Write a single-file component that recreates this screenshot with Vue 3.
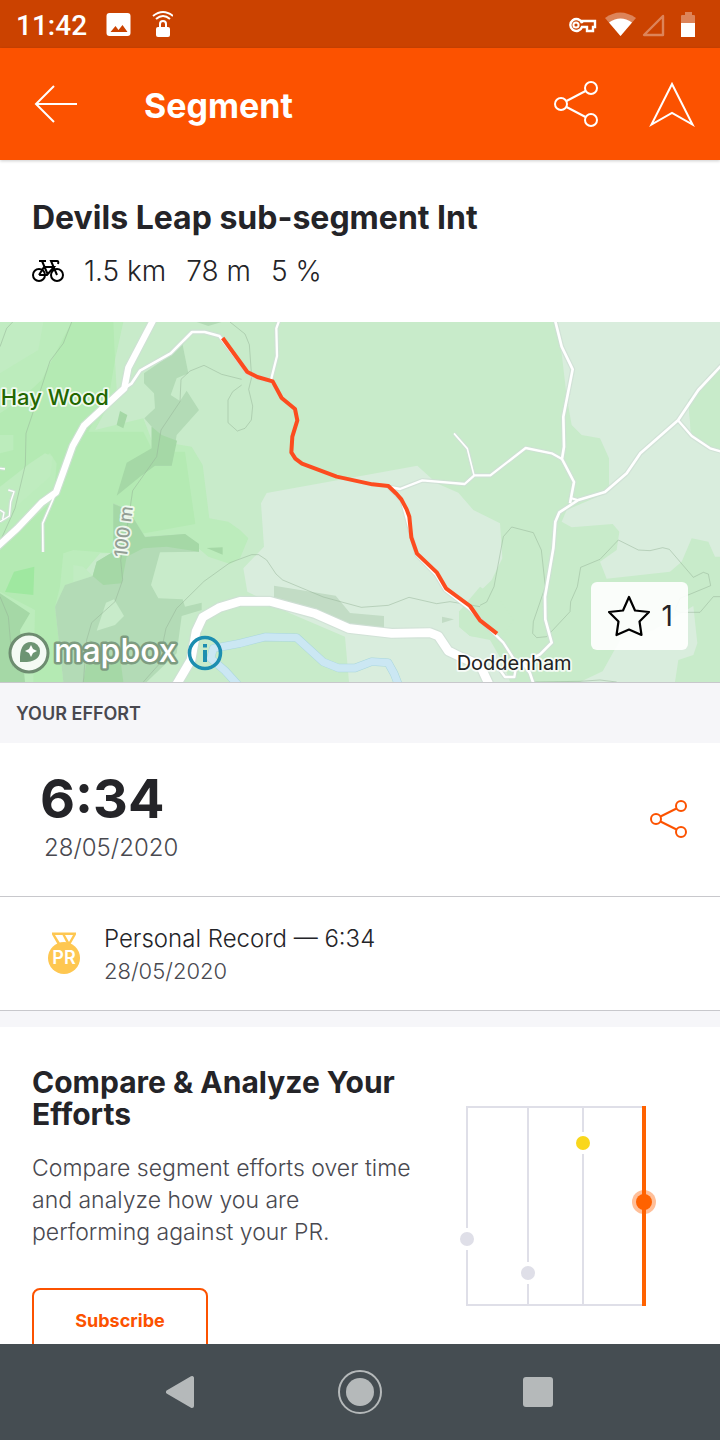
<template>
  <div class="screen">
    <div class="status">
      <span class="status__time">11:42</span>
      <svg class="status__left-icons" width="68" height="32" viewBox="0 0 68 32">
        <path fill="#fff" fill-rule="evenodd" d="M5 5h18q3 0 3 3v17q0 3-3 3h-18q-3 0-3-3v-17q0-3 3-3zM6 24h17l-5-7-4 5-3-4z" transform="translate(-0.500 0)" />
        <rect x="51" y="19" width="14" height="10" rx="2" fill="#fff" />
        <path d="M55 20v-4a3 3 0 0 1 6 0v4M51 11q7-6 14 0M48 8q10-8 20 0" fill="none" stroke="#fff" stroke-width="2" />
      </svg>
      <svg class="status__right-icons" width="130" height="32" viewBox="0 0 130 32">
        <path d="M18 14a6 6 0 1 0 0 4h5v4h6v-4h2v-6h-13z" transform="translate(-1 1)" fill="none" stroke="#fff" stroke-width="2.4" />
        <circle cx="11" cy="17" r="2.6" fill="none" stroke="#fff" stroke-width="2" />
        <path d="M40 10q15-11 31 0l-15.500 18z" fill="#fff" opacity=".35" />
        <path d="M44 14.500q11.500-8 23 0l-11.500 13.500z" fill="#fff" />
        <path d="M79 27h19v-19z" fill="none" stroke="#fff" stroke-width="2.400" stroke-linejoin="round" opacity=".35" />
        <path d="M116 15v-7q0-1 1-1h3v-3h7v3h2q1 0 1 1v7z" fill="#fff" opacity=".35" />
        <path d="M116 15h14v14h-14z" fill="#fff" />
      </svg>
    </div>

    <header class="bar">
      <button class="icon-btn" aria-label="Back">
        <svg width="44" height="40" viewBox="0 0 44 40" fill="none" stroke="#fff" stroke-width="2">
          <path d="M43 20H2M20 2L2 20l18 18" />
        </svg>
      </button>
      <h1 class="bar__title">Segment</h1>
      <button class="icon-btn" aria-label="Share">
        <svg width="46" height="48" viewBox="0 0 46 48" fill="none" stroke="#fff" stroke-width="2">
          <circle cx="7" cy="24" r="6" />
          <circle cx="37" cy="8" r="6" />
          <circle cx="37" cy="40" r="6" />
          <path d="M12.500 21L31.500 11M12.500 27L31.500 37" />
        </svg>
      </button>
      <button class="icon-btn bar__nav" aria-label="Directions">
        <svg width="48" height="48" viewBox="0 0 48 48" fill="none" stroke="#fff" stroke-width="2">
          <path d="M24 4L44.500 44.500L24 33L3.500 44.500Z" />
        </svg>
      </button>
    </header>

    <main class="content">
      <section class="summary">
        <h2 class="summary__name">Devils Leap sub-segment Int</h2>
        <div class="summary__stats">
          <svg width="32" height="24" viewBox="0 0 32 24" fill="none" stroke="#000" stroke-width="2">
            <circle cx="7" cy="16" r="6" />
            <circle cx="25" cy="16" r="6" />
            <path d="M7 16L12 8H22L15 16H7M16 16L10 2M7 2H14M25 16L19 2H25Q27 2 26 5" />
          </svg>
          <span v-for="stat in stats" :key="stat">{{ stat }}</span>
        </div>
      </section>

      <section class="map">
        <svg class="map__canvas" viewBox="0 6 2160 1080" preserveAspectRatio="xMidYMid slice">
          <rect y="6" width="2160" height="1080" fill="#c8ebca" />
          <path v-for="(area, i) in areas" :key="`a${i}`" :d="area.d" :fill="area.fill" />
          <path v-for="(line, i) in contours" :key="`c${i}`" :d="line" class="contour" />
          <path class="river-edge" :d="river" />
          <path class="river" :d="river" />
          <path v-for="(road, i) in roads" :key="`s${i}`" :d="road.d" :stroke-width="road.width + 7" class="casing" />
          <path v-for="(road, i) in roads" :key="`r${i}`" :d="road.d" :stroke-width="road.width" class="road" />
          <path class="route" d="M668 54L742 156L772 171L818 184L845 234L885 267L892 301L877 350L874 397L886 416L906 431L1010 470L1117 493L1165 498L1190 522L1204 538L1220 568L1228 590L1234 652L1251 701L1311 758L1338 805L1410 858L1440 901L1491 941" />
          <text x="2" y="255" class="label label--park">Hay Wood</text>
          <text transform="translate(380 714) rotate(-83)" class="label label--height">100 m</text>
          <text x="1370" y="1050" class="label label--town">Doddenham</text>
        </svg>

        <div class="map__credit">
          <a href="#" class="map__logo" aria-label="Mapbox">
            <svg width="172" height="44" viewBox="0 0 172 44">
              <circle cx="21" cy="22" r="19" fill="#f4faf4" stroke="#6d8c70" stroke-width="3" />
              <path d="M12 31Q11 11 23 11A9 9 0 0 1 32 20Q32 32 12 31Z" fill="#6d9473" />
              <path d="M23 14l2 4 4 2-4 2-2 4-2-4-4-2 4-2z" fill="#fff" />
              <text x="46" y="31">mapbox</text>
            </svg>
          </a>
          <button class="icon-btn" aria-label="Map information">
            <svg width="36" height="36" viewBox="0 0 36 36">
              <circle cx="18" cy="18" r="15.500" fill="none" stroke="#1c8eb0" stroke-width="3.500" />
              <path d="M18 15V27M18 9V12.500" stroke="#1c8eb0" stroke-width="4" />
            </svg>
          </button>
        </div>

        <button class="map__star" @click="toggleStar">
          <svg width="44" height="42" viewBox="0 0 44 42">
            <path d="M22 2L28 15.500L42 17L32.500 26.500L34.500 40L22 34.500L9.500 40L11.500 26.500L2 17L16 15.500Z" :fill="starred ? '#000' : 'none'" stroke="#000" stroke-width="2.200" stroke-linejoin="round" />
          </svg>
          <span>{{ starCount }}</span>
        </button>
      </section>

      <h3 class="section-title">YOUR EFFORT</h3>

      <section class="effort">
        <div class="effort__main">
          <div class="effort__time">6:34</div>
          <div class="effort__date">28/05/2020</div>
        </div>
        <button class="icon-btn" aria-label="Share effort">
          <svg width="38" height="40" viewBox="0 0 38 40" fill="none" stroke="#fc5200" stroke-width="2">
            <circle cx="6" cy="20" r="5" />
            <circle cx="31" cy="7" r="5" />
            <circle cx="31" cy="33" r="5" />
            <path d="M10.500 17.500L26.500 9.500M10.500 22.500L26.500 30.500" />
          </svg>
        </button>
      </section>

      <section class="record">
        <svg width="32" height="46" viewBox="0 0 32 46">
          <path fill="#fec751" fill-rule="evenodd" d="M4 0.500H28V2.500L22 13H10L4 2.500ZM7 3L12 11H18.500L14.500 3ZM17 3L21 10L25 3Z" />
          <circle cx="16" cy="26" r="16" fill="#fec751" />
          <text x="16" y="32" text-anchor="middle">PR</text>
        </svg>
        <div>
          <div class="record__title">Personal Record — 6:34</div>
          <div class="record__date">28/05/2020</div>
        </div>
      </section>

      <section class="promo">
        <div class="promo__text">
          <h3>Compare &amp; Analyze Your Efforts</h3>
          <p>Compare segment efforts over time and analyze how you are performing against your PR.</p>
          <button class="promo__btn">Subscribe</button>
        </div>
        <svg class="promo__chart" width="196" height="200" viewBox="0 0 196 200">
          <path d="M7 1H184M7 199H184M7 0V122M7 144V200M68 0V156M68 178V200M123 0V26M123 48V200" fill="none" stroke="#dfdfe8" stroke-width="2" />
          <circle cx="7" cy="133" r="7" fill="#dfdfe8" />
          <circle cx="68" cy="167" r="7" fill="#dfdfe8" />
          <circle cx="123" cy="37" r="7" fill="#f9d71c" />
          <circle cx="184" cy="96" r="12" fill="#ffbf99" />
          <path d="M184 0V200" stroke="#ff6200" stroke-width="4" />
          <circle cx="184" cy="96" r="8" fill="#ff6200" />
        </svg>
      </section>
    </main>

    <nav class="navbar">
      <button class="icon-btn" aria-label="Back">
        <svg width="32" height="44" viewBox="0 0 32 44">
          <path d="M2 22L26 8V36Z" fill="#b5b9ba" stroke="#b5b9ba" stroke-width="4" stroke-linejoin="round" />
        </svg>
      </button>
      <button class="icon-btn" aria-label="Home">
        <svg width="44" height="44" viewBox="0 0 44 44">
          <circle cx="22" cy="22" r="21" fill="none" stroke="#b5b9ba" stroke-width="2" />
          <circle cx="22" cy="22" r="14" fill="#b5b9ba" />
        </svg>
      </button>
      <button class="icon-btn" aria-label="Recent apps">
        <svg width="32" height="44" viewBox="0 0 32 44">
          <rect x="1" y="7" width="30" height="30" rx="3" fill="#b5b9ba" />
        </svg>
      </button>
    </nav>
  </div>
</template>

<script setup>
import { ref } from 'vue';

const stats = ['1.5 km', '78 m', '5 %'];

const starred = ref(false);
const starCount = ref(1);

const toggleStar = () => {
  starred.value = !starred.value;
  starCount.value += starred.value ? 1 : -1;
};

// Land cover, painted back to front
const areas = [
  // woods
  { fill: '#bcecbc', d: 'M0 6H370L345 120L350 210L285 330L430 295L455 360L575 380L608 435L628 595L685 605L720 630L745 655L720 715L690 732L625 710L590 680L480 697L300 700L165 860L190 1086H0Z' },
  { fill: '#b4eab3', d: 'M215 6H340L345 120L330 210L265 335H430L460 395L555 395L586 612L405 645L340 700L220 690L190 700L180 800L165 860L190 1086H100L105 870L0 815V685L160 540L170 430L150 400L80 440L0 520V400L40 390V345H0V280L60 240L125 180Z' },
  { fill: '#c1ecc2', d: 'M0 6H130L115 90L0 160ZM220 735L250 740L278 768L195 795L180 860L195 1000L220 900Z' },
  { fill: '#bfecbf', d: 'M0 500L90 430L135 400L158 410L150 470L60 550L0 600Z' },
  { fill: '#9fe8a0', d: 'M42 755L103 740L100 825L15 816Z' },
  // hill shading
  { fill: '#b3dbb6', d: 'M570 38L548 75L565 160L530 175L512 225L540 243L560 212L597 270L530 345L515 437H455V320L433 295L465 265L462 220L432 190V160L520 100ZM590 6H665L625 18Z' },
  { fill: '#a5d8a6', d: 'M455 320L485 345L531 362L515 437H465L420 470L350 527L380 428L455 385ZM360 273L382 285L370 325L350 315Z' },
  { fill: '#b3dbb6', d: 'M340 550L385 570L435 650L555 642L597 672V695L480 697L453 795L475 835L548 838L555 860L605 848V870L545 888L530 1000L440 1086H190L165 860L195 795L278 768L290 725L340 695Z' },
  { fill: '#a5d8a6', d: 'M340 552L385 570L435 652L555 642L597 672V695L500 680L430 685L380 710L365 790L310 795L278 768L290 725L340 695ZM620 684L668 682V704ZM0 820L90 880L60 930L75 1086H0ZM250 1086L270 960L310 1000L360 1010L370 1086Z' },
  { fill: '#c8ebca', d: 'M342 838L372 888L345 915L290 932L318 848Z' },
  // open ground
  { fill: '#d9eddd', d: 'M800 519L1252 437L1310 490L1375 518L1420 570L1500 610L1507 715L1475 780L1377 875V920L1410 948L1470 960L1510 1030L1530 1086H1047L1035 950L870 880L742 815L730 745L792 680L783 550Z' },
  { fill: '#c8ebca', d: 'M1440 800L1377 875V920L1410 948L1500 960L1540 900L1500 840Z' },
  { fill: '#d9eddd', d: 'M1665 6H2160V140L2100 210L2065 240L2073 340L2160 395V710H2145L2125 665L2075 655L2045 725L2010 755L1820 776L1800 725L1850 690L1858 635L1838 612L1715 622L1685 605L1700 570L1827 515V415L1800 355L1745 345L1715 315L1700 230L1685 100Z' },
  // field east of the junction
  { fill: '#c8ebca', d: 'M2160 140L2100 210L2065 240L2073 340L2130 380L2160 395Z' },
  { fill: '#d9eddd', d: 'M1860 960L1960 930L2080 858L2092 970L2080 1005L2035 1020L2025 1086H1740L1808 1054Z' },
  { fill: '#c2dcc5', d: 'M822 797L1007 827L1050 879L1152 888V922L1020 915L822 838ZM1326 890L1362 898L1326 909Z' }
];

const contours = [
  'M215 6L190 70L150 123L125 200L78 340L76 435L45 565L0 665',
  'M38 6L20 25L0 80',
  'M725 178L665 163L612 136L570 153L543 178L540 245L483 330L470 410L398 512L385 600L362 720L368 780L345 845L275 908L260 960L250 1086',
  'M0 830L25 890L38 1040',
  'M690 6L735 42L748 74L755 172L746 208L758 258L754 300L735 325L712 333L684 308V240L698 215L725 195',
  'M430 1086L475 1035L498 925L530 865L612 784L690 728L755 704H776L800 720L828 762L848 780L970 831L1084 862L1165 856L1227 832L1310 851L1350 845L1440 860',
  'M1440 856L1460 846L1482 800L1510 650L1535 621L1600 638L1624 690L1636 800L1600 905L1598 940L1610 953L1640 950L1710 875L1712 845L1732 800L1742 742L1800 718L1855 660L1915 690L1950 692L1988 683L2008 688L2080 772L2110 757L2125 762L2132 797L2040 835L2025 870L2040 877H2100L2140 830H2160',
  'M1600 1086L1740 1084L1800 1080L1850 1086'
];

const river = 'M715 1096L675 1052L632 1015L640 985L720 970L795 951L890 953L970 1026L1015 1044L1065 1044L1115 1025L1164 1028L1182 1060L1196 1096';

const roads = [
  { width: 4, d: 'M0 605L28 588L32 545L42 515L25 510M0 570L12 578L8 598M0 445L15 447' },
  { width: 5, d: 'M168 517L128 610L129 696' },
  { width: 19, d: 'M465 -10L385 143L373 205L252 317L218 378L168 517L125 548L52 625L-10 682' },
  { width: 8, d: 'M373 205L395 190L420 152L512 100L576 36H614L658 48L742 158L772 172L818 184' },
  { width: 7, d: 'M838 0L829 25L831 108L813 180' },
  { width: 5, d: 'M1362 340L1402 386L1422 466' },
  { width: 7, d: 'M1165 500L1200 507L1267 481L1394 492L1423 466H1471L1577 384L1655 400L1686 417' },
  { width: 8, d: 'M1665 0L1685 80L1718 148L1690 290L1692 380L1686 417L1722 486L1710 550' },
  { width: 8, d: 'M2170 130L2095 210L2034 301L1921 400L1880 460L1815 516L1735 540L1678 577L1666 605L1660 685L1635 830L1636 898L1655 968L1620 1003L1570 1030L1590 1060L1600 1090' },
  { width: 7, d: 'M2034 301L2075 348L2130 385L2165 395M1712 534L1735 541' },
  { width: 7, d: 'M1165 500L1205 540L1250 705L1308 765L1335 810L1410 868L1510 968L1550 1030L1543 1071H1515L1500 1050' },
  { width: 26, d: 'M520 1110L573 1020L588 935L608 892L660 862L720 844H810L943 880L1045 925L1175 940L1290 938L1315 948L1345 993L1380 1010L1440 1035L1470 1100' }
];
</script>

<style>
html,
body {
  margin: 0;
  background-color: #fff;
}
</style>

<style scoped>
.screen {
  display: flex;
  flex-direction: column;
  height: 100vh;
  font-family: Inter, "Liberation Sans", sans-serif;
  color: #242428;
}

h1,
h2,
h3,
p {
  margin: 0;
}

svg {
  display: block;
  flex-shrink: 0;
}

button {
  font-family: inherit;
  cursor: pointer;
}

.icon-btn {
  padding: 0;
  border: none;
  background: transparent;
}

/* Status bar */
.status {
  display: flex;
  align-items: center;
  flex-shrink: 0;
  height: 48px;
  padding: 0 25px 0 16px;
  background-color: #cb4200;
  color: #fff;
}

.status__time {
  padding-top: 2px;
  font-family: Roboto, sans-serif;
  font-size: 28px;
  font-weight: 500;
}

.status__left-icons {
  margin-left: 18px;
}

.status__right-icons {
  margin-left: auto;
}

/* App bar */
.bar {
  display: flex;
  align-items: center;
  flex-shrink: 0;
  height: 112px;
  padding: 0 24px 0 34px;
  background-color: #fc5200;
  box-shadow: 0 1px 3px rgba(0, 0, 0, 0.2);
  color: #fff;
}

.bar__title {
  flex: 1;
  margin-left: 66px;
  padding-top: 4px;
  font-size: 34px;
  line-height: 40px;
  font-weight: 700;
}

.bar__nav {
  margin-left: 48px;
}

.content {
  flex: 1;
  min-height: 0;
  overflow-y: auto;
  scrollbar-width: none;
}

/* Segment summary */
.summary {
  padding: 37px 32px 31px;
}

.summary__name {
  font-size: 32px;
  line-height: 42px;
  font-weight: 700;
}

.summary__stats {
  display: flex;
  align-items: center;
  gap: 20px;
  margin-top: 12px;
  font-size: 28px;
  line-height: 40px;
  font-weight: 300;
}

/* Map */
.map {
  position: relative;
  height: 360px;
  border-bottom: 1px solid #c8c8cc;
  overflow: hidden;
}

.map__canvas {
  width: 100%;
  height: 100%;
}

.map__canvas path {
  stroke-linejoin: round;
}

.contour {
  fill: none;
  stroke: #96b498;
  stroke-opacity: 0.5;
  stroke-width: 3;
}

.river,
.river-edge {
  fill: none;
  stroke: #cbe7f3;
  stroke-width: 22;
}

.river-edge {
  stroke: #a9d6dd;
  stroke-width: 25;
}

.casing {
  fill: none;
  stroke: #cfdfd6;
  stroke-opacity: 0.8;
}

.road {
  fill: none;
  stroke: #fff;
}

.route {
  fill: none;
  stroke: #fc4c1f;
  stroke-width: 12;
}

.label {
  stroke: #fff;
  stroke-width: 11;
  stroke-opacity: 0.8;
  stroke-linejoin: round;
  paint-order: stroke;
}

.label--park {
  font-size: 66px;
  font-weight: 500;
  fill: #236700;
}

.label--height {
  font-size: 54px;
  font-weight: 500;
  fill: #939e94;
}

.label--town {
  font-size: 60px;
  fill: #222;
}

.map__credit {
  position: absolute;
  left: 8px;
  bottom: 7px;
  display: flex;
  align-items: center;
  gap: 7px;
}

.map__logo text {
  font-size: 32px;
  font-weight: 500;
  fill: #fff;
  stroke: #7d9c80;
  stroke-width: 5;
  stroke-linejoin: round;
  paint-order: stroke;
}

.map__star {
  position: absolute;
  right: 32px;
  bottom: 32px;
  display: flex;
  align-items: center;
  gap: 11px;
  height: 68px;
  padding: 0 15px 0 16px;
  border: none;
  border-radius: 6px;
  background-color: rgba(255, 255, 255, 0.9);
  color: #242428;
  font-size: 28px;
}

.section-title {
  padding: 2px 16px 0;
  background-color: #f6f6f9;
  color: #494950;
  font-size: 18px;
  line-height: 58px;
  font-weight: 600;
}

/* Effort */
.effort {
  display: flex;
  align-items: center;
  justify-content: space-between;
  padding: 30px 32px 32px 40px;
  border-bottom: 1px solid #c8c8cc;
}

.effort__time {
  font-size: 54px;
  line-height: 52px;
  font-weight: 700;
}

.effort__date {
  margin: 7px 4px 0;
  color: #494950;
  font-size: 24px;
  line-height: 32px;
  font-weight: 300;
}

.record {
  display: flex;
  align-items: center;
  gap: 24px;
  padding: 25px 48px 23px;
  border-bottom: 1px solid #c8c8cc;
}

.record text {
  fill: #fff;
  font-size: 18px;
  font-weight: 600;
}

.record__title {
  font-size: 24px;
  line-height: 33px;
  font-weight: 300;
}

.record__date {
  color: #494950;
  font-size: 22px;
  line-height: 32px;
  font-weight: 300;
}

/* Upsell */
.promo {
  display: flex;
  gap: 36px;
  padding: 39px 64px 32px 32px;
  border-top: 16px solid #f6f6f9;
}

.promo__text {
  flex: 1;
}

.promo__text h3 {
  font-size: 30px;
  line-height: 32px;
  font-weight: 700;
}

.promo__text p {
  margin-top: 22px;
  padding-right: 8px;
  color: #494950;
  font-size: 23px;
  line-height: 32px;
  font-weight: 300;
}

.promo__btn {
  width: 176px;
  height: 64px;
  margin-top: 40px;
  border: 2px solid #fc5200;
  border-radius: 8px;
  background-color: #fff;
  color: #fc5200;
  font-size: 18px;
  font-weight: 700;
}

.promo__chart {
  margin-top: 40px;
}

/* System navigation */
.navbar {
  display: flex;
  align-items: center;
  justify-content: center;
  gap: 140px;
  flex-shrink: 0;
  height: 96px;
  background-color: #454d52;
}
</style>
